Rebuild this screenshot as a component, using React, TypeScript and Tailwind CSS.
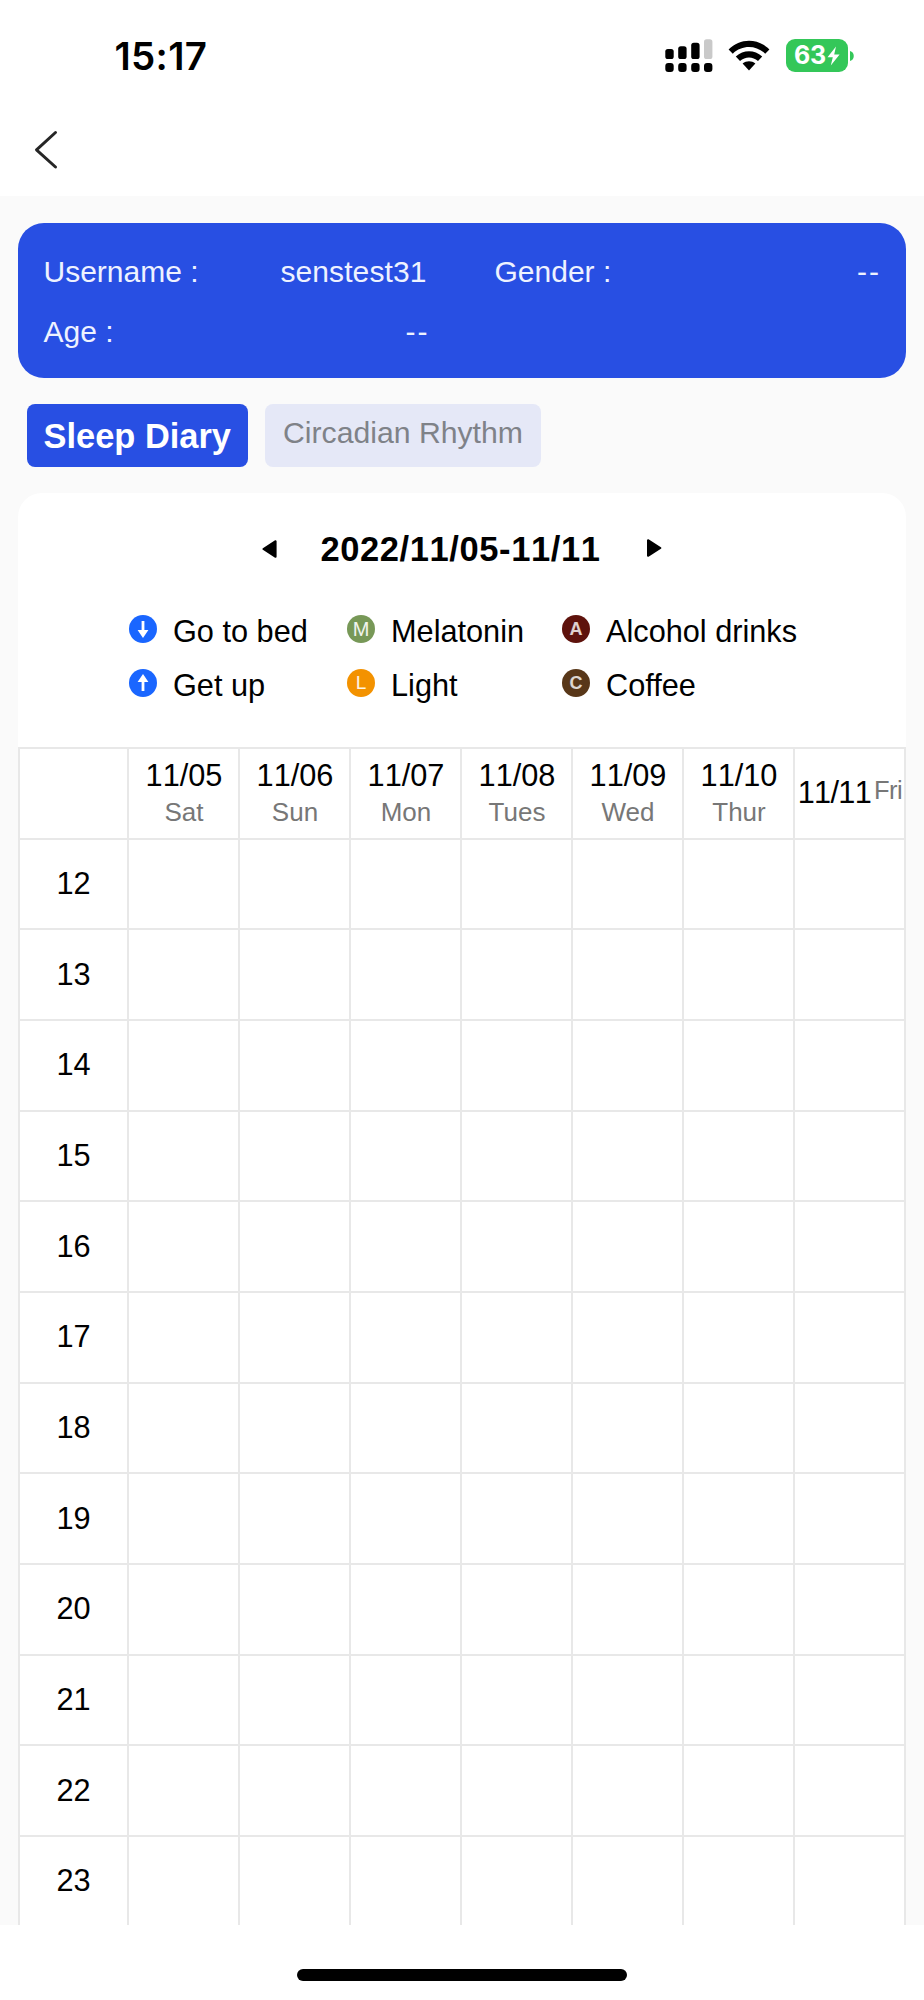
import React from "react";

const days = [
  { date: "11/05", name: "Sat" },
  { date: "11/06", name: "Sun" },
  { date: "11/07", name: "Mon" },
  { date: "11/08", name: "Tues" },
  { date: "11/09", name: "Wed" },
  { date: "11/10", name: "Thur" },
];

const hours = [12, 13, 14, 15, 16, 17, 18, 19, 20, 21, 22, 23];

function StatusBar() {
  return (
    <div className="flex h-[112px] items-center justify-between pr-[70px] pl-[114.5px] font-['Inter',sans-serif]">
      <span className="text-[38.5px] leading-[46px] font-semibold tracking-[0.3px]">15:17</span>
      <div className="-mt-px flex items-center">
        <svg className="h-[36px] w-[50px]" viewBox="0 0 50 36">
          <rect x="1.3" y="11" width="8.4" height="10" rx="2.6" />
          <rect x="14.2" y="8.2" width="8.4" height="12.8" rx="2.6" />
          <rect x="27.2" y="4.8" width="8.4" height="16.2" rx="2.6" />
          <rect x="40" y="1.2" width="8.4" height="19.8" rx="2.6" fill="#c9c9c9" />
          <rect x="1.3" y="25" width="8.4" height="9" rx="3" />
          <rect x="14.2" y="25" width="8.4" height="9" rx="3" />
          <rect x="27.2" y="25" width="8.4" height="9" rx="3" />
          <rect x="40" y="25" width="8.4" height="9" rx="3" />
        </svg>
        <svg className="ml-[14px] h-[32px] w-[42px]" viewBox="0 0 42 32">
          <path d="M0.6 9.4C12-2.2 30-2.2 41.4 9.4L37.2 13.7C28.2 4.8 13.8 4.8 4.8 13.7Z" />
          <path d="M7.8 16.6C15.4 9.4 26.6 9.4 34.2 16.6L30 20.9C24.8 16.2 17.2 16.2 12 20.9Z" />
          <path d="M14.6 23.6C18.4 20.6 23.6 20.6 27.4 23.6L21 30.6Z" />
        </svg>
        <div className="ml-[16px] flex h-[33px] w-[62px] items-center justify-center rounded-[9px] bg-[#34c759] text-white">
          <span className="text-[25px] leading-[33px] font-bold tracking-[-0.2px]">63</span>
          <svg className="ml-px h-[20px] w-[13px]" viewBox="0 0 13 20" fill="#fff">
            <path d="M9 0.5L0.5 11.2H5.8L3.8 19.5L12.6 8.4H7.2Z" />
          </svg>
        </div>
        <svg className="ml-[2px] h-[10px] w-[4px]" viewBox="0 0 4 10" fill="#34c759">
          <path d="M0 0C5 1 5 9 0 10Z" />
        </svg>
      </div>
    </div>
  );
}

function Field({ label, value, className }: { label: string; value: string; className: string }) {
  return (
    <div className={"flex h-[60.5px] items-center justify-between " + className}>
      <span>{label}</span>
      <span className={value === "--" ? "tracking-[2px]" : "pr-[2px] tracking-[0.1px]"}>{value}</span>
    </div>
  );
}

function Badge({ color, children }: { color: string; children: React.ReactNode }) {
  return (
    <span className={"-mt-[5px] flex size-[28px] items-center justify-center rounded-full leading-[28px] " + color}>
      {children}
    </span>
  );
}

function Arrow({ up }: { up?: boolean }) {
  return (
    <svg className={up ? "size-[28px] rotate-180" : "size-[28px]"} viewBox="0 0 28 28" fill="#fff">
      <path d="M12.6 6H15.4V15H19.4L14 23L8.6 15H12.6Z" />
    </svg>
  );
}

function LegendItem({ color, icon, label }: { color: string; icon: React.ReactNode; label: string }) {
  return (
    <div className="flex h-[53.8px] items-center gap-[16px]">
      <Badge color={color}>{icon}</Badge>
      <span className="text-[30.7px] leading-[36px] whitespace-nowrap">{label}</span>
    </div>
  );
}

const cell = "border-r-2 border-b-2 border-[#e8e8e8]";

export default function App() {
  return (
    <div className="flex h-[2000px] w-[924px] flex-col overflow-hidden bg-white font-['Liberation_Sans',Arial,sans-serif] text-black">
      <StatusBar />
      <div className="flex h-[84px] items-start pt-[17px] pl-[33px]">
        <svg className="h-[42px] w-[26px]" viewBox="0 0 26 42" fill="none" stroke="#262626" strokeWidth="3" strokeLinecap="round" strokeLinejoin="round">
          <path d="M22.5 3.5L3.5 20.8L22.5 38" />
        </svg>
      </div>

      <main className="flex h-[1729px] flex-col overflow-hidden bg-[#fafafa] px-[18px] pt-[27px]">
        <section className="flex h-[155px] shrink-0 flex-wrap content-start rounded-[26px] bg-[#284fe3] pt-[18.5px] pl-[25.5px] text-[30px] leading-[36px] text-[#eef2ff]">
          <Field label="Username :" value="senstest31" className="w-[385px]" />
          <Field label="Gender :" value="--" className="ml-[66px] w-[386.5px]" />
          <Field label="Age :" value="--" className="w-[386px]" />
        </section>

        <nav className="mt-[26px] flex h-[63px] shrink-0 gap-[17px] pl-[8.5px]">
          <button className="flex w-[221.5px] items-center justify-center rounded-[8px] bg-[#284fe3] text-[34.4px] leading-[40px] font-bold whitespace-nowrap text-white">
            Sleep Diary
          </button>
          <button className="flex w-[276px] items-center justify-center rounded-[8px] bg-[#e5e8f7] pb-[5px] text-[30.2px] leading-[36px] whitespace-nowrap text-[#7f8288]">
            Circadian Rhythm
          </button>
        </nav>

        <section className="mt-[26px] flex shrink-0 flex-col rounded-t-[24px] bg-white">
          <div className="flex h-[112px] items-center pl-[243px]">
            <svg className="h-[20px] w-[16px]" viewBox="0 0 16 20" strokeWidth="2" stroke="#000" strokeLinejoin="round">
              <path d="M14.6 2.2V17.8L2.4 10Z" />
            </svg>
            <span className="ml-[42px] w-[283px] text-center text-[34.5px] leading-[40px] font-bold tracking-[0.6px] whitespace-nowrap [font-kerning:none]">
              2022/11/05-11/11
            </span>
            <svg className="-mt-[3px] ml-[44px] h-[20px] w-[16px]" viewBox="0 0 16 20" strokeWidth="2" stroke="#000" strokeLinejoin="round">
              <path d="M2 2.2V17.8L14.4 10Z" />
            </svg>
          </div>
          <div className="grid h-[142px] grid-cols-[218px_215px_1fr] content-start pl-[111px]">
            <LegendItem color="bg-[#1a66ff]" icon={<Arrow />} label="Go to bed" />
            <LegendItem color="bg-[#779857]" icon={<span className="text-[20px] text-white/90">M</span>} label="Melatonin" />
            <LegendItem color="bg-[#5e120c]" icon={<span className="text-[18px] font-bold text-white/80">A</span>} label="Alcohol drinks" />
            <LegendItem color="bg-[#1a66ff]" icon={<Arrow up />} label="Get up" />
            <LegendItem color="bg-[#f39200]" icon={<span className="text-[19px] text-white/90">L</span>} label="Light" />
            <LegendItem color="bg-[#583719]" icon={<span className="text-[18px] font-bold text-white/80">C</span>} label="Coffee" />
          </div>

          <div className="grid w-[888px] grid-cols-[109px_repeat(7,111px)] auto-rows-[90.66px] border-t-2 border-l-2 border-[#e8e8e8] text-[30.7px]">
            <div className={cell} />
            {days.map((d) => (
              <div key={d.date} className={"flex flex-col items-center pt-[9px] pl-px " + cell}>
                <span className="leading-[36px] [font-kerning:none]">{d.date}</span>
                <span className="text-[26px] leading-[36px] text-[#777]">{d.name}</span>
              </div>
            ))}
            <div className={"flex items-start justify-center gap-[3px] pt-[25px] pl-px whitespace-nowrap " + cell}>
              <span className="leading-[37px] tracking-[-0.7px] [font-kerning:none]">11/11</span>
              <span className="text-[25.5px] leading-[32px] tracking-[-0.5px] text-[#777]">Fri</span>
            </div>
            {hours.map((h) => (
              <React.Fragment key={h}>
                <div className={"flex items-center justify-center leading-[36px] " + cell}>{h}</div>
                {Array.from({ length: 7 }, (_, i) => (
                  <div key={i} className={cell} />
                ))}
              </React.Fragment>
            ))}
          </div>
        </section>
      </main>

      <footer className="flex h-[75px] items-start justify-center pt-[44px]">
        <div className="h-[12px] w-[330px] rounded-full bg-black" />
      </footer>
    </div>
  );
}
